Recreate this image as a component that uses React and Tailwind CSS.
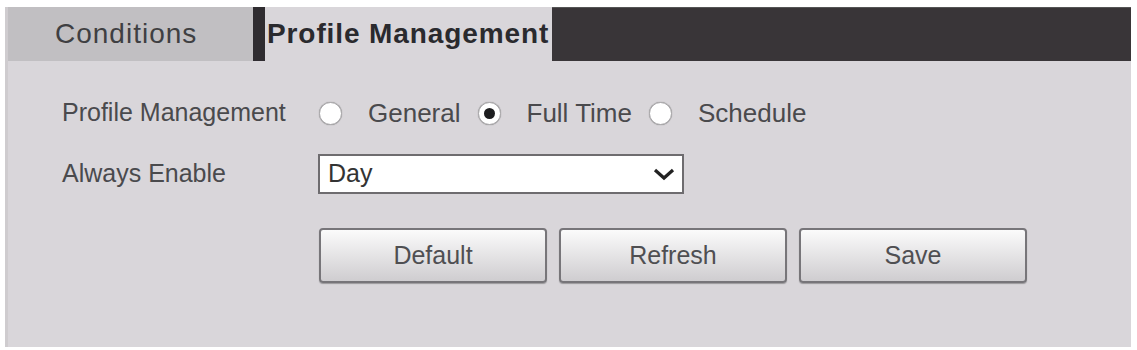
export default function App() {
  const font = { fontFamily: '"Liberation Sans", Arial, sans-serif' }
  const radios = [
    { label: 'General', checked: false },
    { label: 'Full Time', checked: true },
    { label: 'Schedule', checked: false },
  ]
  return (
    <div className="w-[1137px] h-[350px] bg-white pl-[5px] pt-[7px]" style={font}>
      <div className="w-[1126px] h-[340px] bg-[#d9d6da] border-l-[3px] border-[#cfcccf] flex flex-col">
        {/* tabs */}
        <div className="flex h-[54px]">
          <div className="w-[245px] bg-[#c1bfc2] flex items-center pl-[47px] text-[28px] tracking-[1px] text-[#3f3f42]">
            Conditions
          </div>
          <div className="w-[12px] bg-[#2f2c30]" />
          <div className="w-[287px] flex items-center pl-[2px] text-[28px] font-bold text-[#2a2a2e] tracking-[0.9px] whitespace-nowrap overflow-hidden">
            Profile Management
          </div>
          <div className="flex-1 bg-[#393538] border-t border-[#555]" />
        </div>

        {/* form */}
        <div className="pl-[54px] pt-[37px] flex flex-col">
          <div className="flex items-center h-[30px]">
            <div className="w-[257px] text-[25px] text-[#4a4a4d]">Profile Management</div>
            <div className="flex items-center">
              {radios.map((r, i) => (
                <div key={r.label} className={`flex items-center ${i === 0 ? '' : 'ml-[17px]'}`}>
                  <span className="w-[23px] h-[23px] rounded-full bg-white border border-[#a9a7aa] shadow-[0_0_1px_#888] flex items-center justify-center">
                    {r.checked && <span className="w-[11px] h-[11px] rounded-full bg-[#1d1d1f]" />}
                  </span>
                  <span className="ml-[26px] text-[26px] text-[#4a4a4d]">{r.label}</span>
                </div>
              ))}
            </div>
          </div>

          <div className="flex items-center mt-[26px]">
            <div className="w-[256px] text-[25px] text-[#4a4a4d]">Always Enable</div>
            <div className="w-[366px] h-[40px] bg-white border-2 border-[#6e6c6f] flex items-center justify-between pl-[8px] pr-[6px]">
              <span className="text-[25px] text-[#333]">Day</span>
              <svg width="24" height="16" viewBox="0 0 24 16">
                <path d="M3 4 L12 12 L21 4" fill="none" stroke="#222" strokeWidth="3.2" />
              </svg>
            </div>
          </div>

          <div className="flex gap-[12px] ml-[257px] mt-[34px]">
            {['Default', 'Refresh', 'Save'].map((b) => (
              <button
                key={b}
                className="w-[228px] h-[55px] rounded-[4px] border-2 border-[#777579] bg-gradient-to-b from-[#fbfbfb] to-[#cfcdd0] shadow-[0_1px_1px_#9a989b] text-[25px] text-[#4f4f52]"
              >
                {b}
              </button>
            ))}
          </div>
        </div>
      </div>
    </div>
  )
}
